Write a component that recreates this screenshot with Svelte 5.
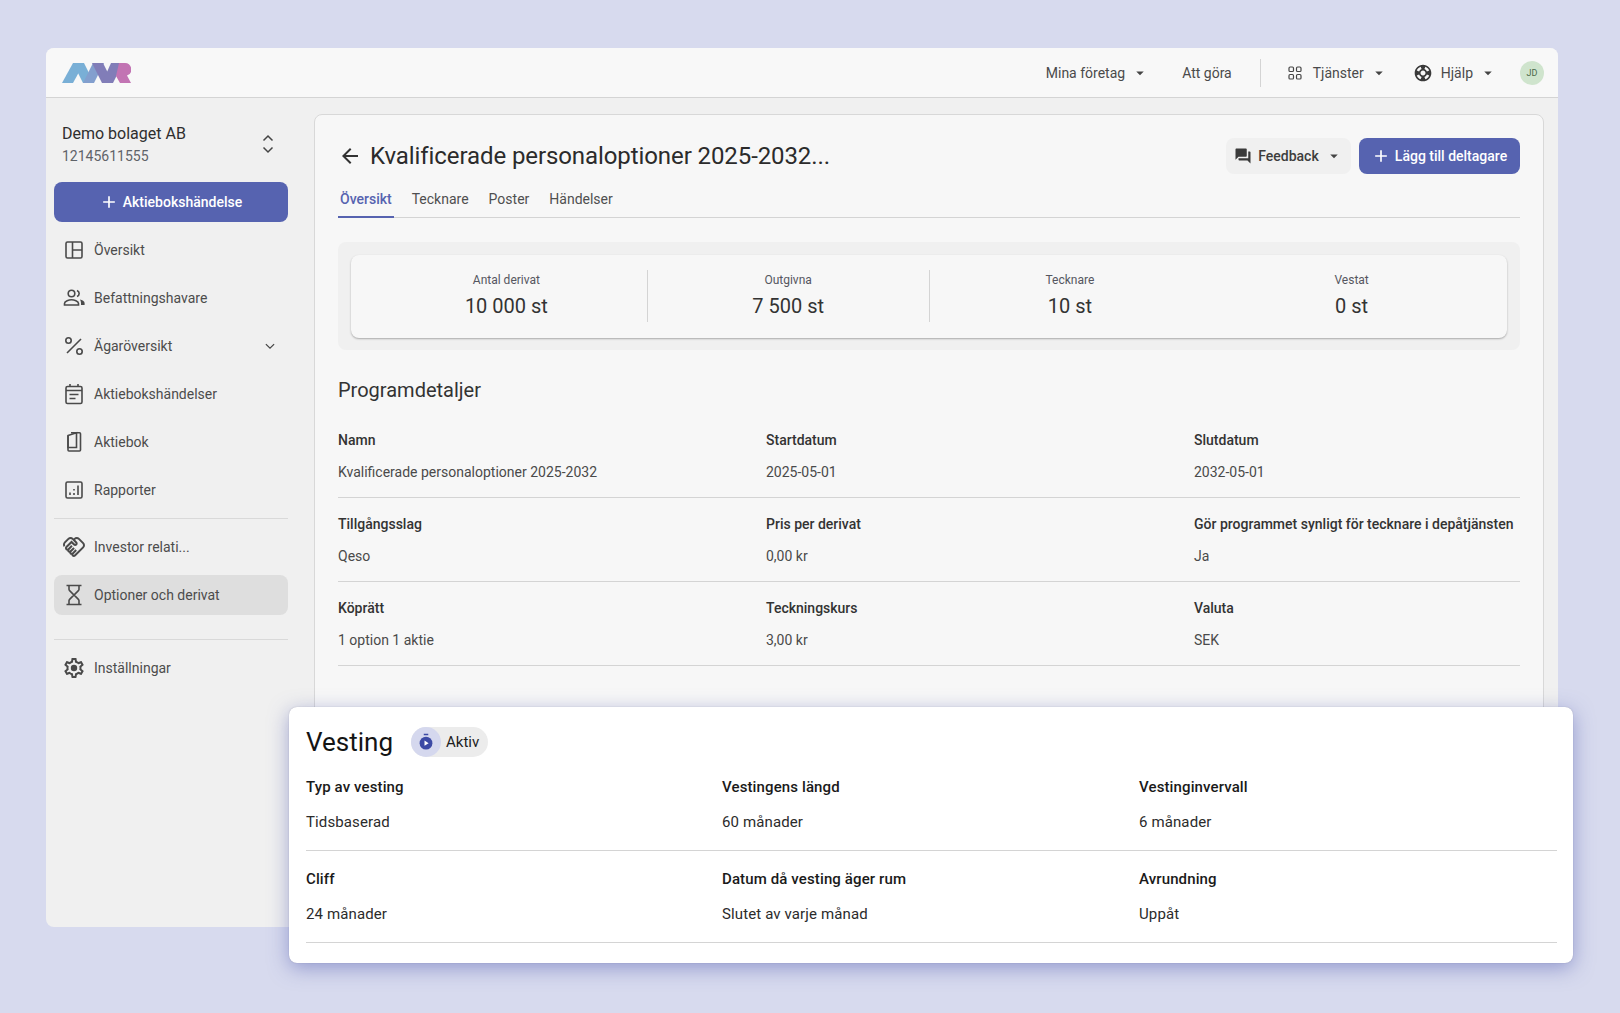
<script>
  const d = {
    add: 'M19 13h-6v6h-2v-6H5v-2h6V5h2v6h6v2z',
    back: 'M20 11H7.83l5.59-5.59L12 4l-8 8 8 8 1.41-1.41L7.83 13H20v-2z',
    drop: 'M7 10l5 5 5-5z',
    forum: 'M21 6h-2v9H6v2c0 .55.45 1 1 1h11l4 4V7c0-.55-.45-1-1-1zm-4 6V3c0-.55-.45-1-1-1H3c-.55 0-1 .45-1 1v14l4-4h10c.55 0 1-.45 1-1z',
    support: 'M12 2C6.48 2 2 6.48 2 12s4.48 10 10 10 10-4.48 10-10S17.52 2 12 2zm7.46 7.12l-2.78 1.15c-.51-1.36-1.58-2.44-2.95-2.94l1.15-2.78c2.1.8 3.77 2.47 4.58 4.57zM12 15c-1.66 0-3-1.34-3-3s1.34-3 3-3 3 1.34 3 3-1.34 3-3 3zM9.13 4.54l1.17 2.78c-1.38.5-2.47 1.59-2.98 2.97L4.54 9.13c.81-2.11 2.48-3.78 4.59-4.59zM4.54 14.87l2.78-1.15c.51 1.38 1.59 2.46 2.97 2.96l-1.17 2.78c-2.1-.81-3.77-2.48-4.58-4.59zm10.34 4.59l-1.15-2.78c1.37-.51 2.45-1.59 2.95-2.97l2.78 1.17c-.81 2.1-2.48 3.77-4.58 4.58z',
    hand: 'M12.22 19.85c-.18.18-.5.21-.71 0-.18-.18-.21-.5 0-.71l3.39-3.39-1.41-1.41-3.39 3.39c-.19.2-.51.19-.71 0-.21-.21-.18-.53 0-.71l3.39-3.39-1.41-1.41-3.39 3.39c-.18.18-.5.21-.71 0-.19-.19-.19-.51 0-.71l3.39-3.39-1.42-1.41-3.39 3.39c-.18.18-.5.21-.71 0-.19-.2-.19-.51 0-.71L9.52 8.4l1.87 1.86c.95.95 2.59.94 3.54 0 .98-.98.98-2.56 0-3.54l-1.86-1.86.28-.28c.78-.78 2.05-.78 2.83 0l4.24 4.24c.78.78.78 2.05 0 2.83l-8.2 8.2zm9.61-6.78c1.56-1.56 1.56-4.09 0-5.66l-4.24-4.24c-1.56-1.56-4.09-1.56-5.66 0l-.28.28-.28-.28c-1.56-1.56-4.09-1.56-5.66 0L2.17 6.71c-1.42 1.42-1.55 3.63-.4 5.19l1.45-1.45c-.39-.75-.26-1.7.37-2.33l3.54-3.54c.78-.78 2.05-.78 2.83 0l3.56 3.56c.18.18.21.5 0 .71-.21.21-.53.18-.71 0L9.52 5.57l-5.8 5.79c-.98.97-.98 2.56 0 3.54.39.39.89.63 1.42.7.07.52.3 1.02.7 1.42.4.4.9.63 1.42.7.07.52.3 1.02.7 1.42.4.4.9.63 1.42.7.07.54.31 1.03.7 1.42.47.47 1.1.73 1.77.73.67 0 1.3-.26 1.77-.73l8.21-8.19z',
    gear: 'M19.43 12.98c.04-.32.07-.64.07-.98 0-.34-.03-.66-.07-.98l2.11-1.65c.19-.15.24-.42.12-.64l-2-3.46c-.09-.16-.26-.25-.44-.25-.06 0-.12.01-.17.03l-2.49 1c-.52-.4-1.08-.73-1.69-.98l-.38-2.65C14.46 2.18 14.25 2 14 2h-4c-.25 0-.46.18-.49.42l-.38 2.65c-.61.25-1.17.59-1.69.98l-2.49-1c-.06-.02-.12-.03-.18-.03-.17 0-.34.09-.43.25l-2 3.46c-.13.22-.07.49.12.64l2.11 1.65c-.04.32-.07.65-.07.98 0 .33.03.66.07.98l-2.11 1.65c-.19.15-.24.42-.12.64l2 3.46c.09.16.26.25.44.25.06 0 .12-.01.17-.03l2.49-1c.52.4 1.08.73 1.69.98l.38 2.65c.03.24.24.42.49.42h4c.25 0 .46-.18.49-.42l.38-2.65c.61-.25 1.17-.59 1.69-.98l2.49 1c.06.02.12.03.18.03.17 0 .34-.09.43-.25l2-3.46c.12-.22.07-.49-.12-.64l-2.11-1.65zm-1.98-1.71c.04.31.05.52.05.73 0 .21-.02.43-.05.73l-.14 1.13.89.7 1.08.84-.7 1.21-1.27-.51-1.04-.42-.9.68c-.43.32-.84.56-1.25.73l-1.06.43-.16 1.13-.2 1.35h-1.4l-.19-1.35-.16-1.13-1.06-.43c-.43-.18-.83-.41-1.23-.71l-.91-.7-1.06.43-1.27.51-.7-1.21 1.08-.84.89-.7-.14-1.13c-.03-.31-.05-.54-.05-.74s.02-.43.05-.73l.14-1.13-.89-.7-1.08-.84.7-1.21 1.27.51 1.04.42.9-.68c.43-.32.84-.56 1.25-.73l1.06-.43.16-1.13.2-1.35h1.39l.19 1.35.16 1.13 1.06.43c.43.18.83.41 1.23.71l.91.7 1.06-.43 1.27-.51.7 1.21-1.07.85-.89.7.14 1.13z'
  };
  const nav1 = [
    { t: 'Översikt', i: 'quilt' },
    { t: 'Befattningshavare', i: 'people' },
    { t: 'Ägaröversikt', i: 'percent', more: true },
    { t: 'Aktiebokshändelser', i: 'cal' },
    { t: 'Aktiebok', i: 'book' },
    { t: 'Rapporter', i: 'chart' }
  ];
  const tabs = ['Översikt', 'Tecknare', 'Poster', 'Händelser'];
  const stats = [['Antal derivat', '10 000 st'], ['Outgivna', '7 500 st'], ['Tecknare', '10 st'], ['Vestat', '0 st']];
  const details = [
    [['Namn', 'Kvalificerade personaloptioner 2025-2032'], ['Startdatum', '2025-05-01'], ['Slutdatum', '2032-05-01']],
    [['Tillgångsslag', 'Qeso'], ['Pris per derivat', '0,00 kr'], ['Gör programmet synligt för tecknare i depåtjänsten', 'Ja']],
    [['Köprätt', '1 option 1 aktie'], ['Teckningskurs', '3,00 kr'], ['Valuta', 'SEK']]
  ];
  const vesting = [
    [['Typ av vesting', 'Tidsbaserad'], ['Vestingens längd', '60 månader'], ['Vestinginvervall', '6 månader']],
    [['Cliff', '24 månader'], ['Datum då vesting äger rum', 'Slutet av varje månad'], ['Avrundning', 'Uppåt']]
  ];
</script>

{#snippet caret()}
  <svg class="caret" viewBox="0 0 24 24"><path d={d.drop} /></svg>
{/snippet}

{#snippet navIcon(name)}
  <svg class="nav-icon" viewBox="0 0 24 24">
    {#if name === 'quilt'}
      <g class="line"><rect x="4" y="4" width="16" height="16" rx="1.500" /><path d="M10.500 4v16M10.500 12H20" /></g>
    {:else if name === 'people'}
      <g class="line"><circle cx="9.500" cy="7.500" r="3.300" /><path d="M2.500 19v-1.600c0-2.400 4.600-3.600 7-3.600s7 1.200 7 3.600V19z" /><path d="M15 4.400a3.300 3.300 0 0 1 0 6.200" /></g>
      <path d="M18 13.400c2.200.5 4.600 1.600 4.600 3.700V19H19v-1.900c0-1.500-.4-2.700-1-3.700z" />
    {:else if name === 'percent'}
      <g class="line"><path d="M19 5 5 19" /><circle cx="6.500" cy="6.500" r="2.700" /><circle cx="17.500" cy="17.500" r="2.700" /></g>
    {:else if name === 'cal'}
      <g class="line"><rect x="4" y="4.500" width="16" height="17" rx="1.500" /><path d="M8 2v3M16 2v3M4 8.500h16M7.500 12.500h9M7.500 16.500h6" /></g>
    {:else if name === 'book'}
      <g class="line"><path d="M9 2.800h8.500a1 1 0 0 1 1 1V20a1 1 0 0 1-1 1H7a1 1 0 0 1-1-1V5.500" /><path d="M6 5.500 14.500 2.800V17.500H6z" /></g>
    {:else if name === 'chart'}
      <g class="line"><rect x="4" y="4" width="16" height="16" rx="1.500" /><path d="M8 14.500V17M12 11v1.500M12 15v2M16 7.500V17" /></g>
    {:else if name === 'hand'}
      <path d={d.hand} />
    {:else if name === 'glass'}
      <g class="line"><path d="M4.500 21.500h15M4.500 2.500h15M17 21.500v-3.700a2 2 0 0 0-.6-1.400L12 12l-4.400 4.400a2 2 0 0 0-.6 1.400v3.700M7 2.500v3.700a2 2 0 0 0 .6 1.400L12 12l4.400-4.400a2 2 0 0 0 .6-1.400V2.500" /></g>
    {:else if name === 'gear'}
      <path d={d.gear} /><circle cx="12" cy="12" r="3.200" />
    {/if}
  </svg>
{/snippet}

{#snippet navItem(item, active)}
  <div class="nav-item" class:active>
    {@render navIcon(item.i)}
    <span>{item.t}</span>
    {#if item.more}
      <svg class="more" viewBox="0 0 24 24"><path d="M6.500 9.500 12 15l5.500-5.500" /></svg>
    {/if}
  </div>
{/snippet}

<div class="window">
  <header class="topbar">
    <svg class="logo" viewBox="0 0 69 20" aria-label="MVR">
      <g opacity=".75">
        <polygon points="0,20 11,0 22,0 11,20" fill="#4f97cb" />
        <polygon points="11,0 22,0 32,20 21,20" fill="#4f97cb" />
        <polygon points="21,20 32,20 42,0 31,0" fill="#5c82c0" />
        <polygon points="30,0 41,0 51,20 40,20" fill="#5a55a3" />
        <polygon points="40,20 51,20 61,0 49,0" fill="#5a55a3" />
        <path d="M57 0h6a6.500 6.500 0 0 1 2 12.600L69 20H58l-4-7z" fill="#b0489c" />
      </g>
    </svg>
    <div class="topnav">
      <div class="tn mina">Mina företag {@render caret()}</div>
      <div class="tn attgora">Att göra</div>
      <div class="sep"></div>
      <div class="tn tjanster">
        <svg class="grid-icon" viewBox="0 0 24 24"><g class="line"><rect x="4" y="4" width="6" height="6" rx="1.500" /><rect x="14" y="4" width="6" height="6" rx="1.500" /><rect x="4" y="14" width="6" height="6" rx="1.500" /><rect x="14" y="14" width="6" height="6" rx="1.500" /></g></svg>
        Tjänster {@render caret()}
      </div>
      <div class="tn hjalp">
        <svg class="life-icon" viewBox="0 0 24 24"><path d={d.support} /></svg>
        Hjälp {@render caret()}
      </div>
      <div class="avatar">JD</div>
    </div>
  </header>

  <div class="body">
    <aside class="sidebar">
      <div class="company">
        <div>
          <div class="co-name">Demo bolaget AB</div>
          <div class="co-id">12145611555</div>
        </div>
        <svg class="unfold" viewBox="0 0 12 20"><path d="M1.500 6.500 6 2l4.500 4.500M1.500 13.500 6 18l4.500-4.500" /></svg>
      </div>
      <button class="primary side-btn">
        <svg class="plus" viewBox="0 0 24 24"><path d={d.add} /></svg>Aktiebokshändelse
      </button>
      <nav class="nav">
        {#each nav1 as item}
          {@render navItem(item, false)}
        {/each}
      </nav>
      <div class="rule rule-a"></div>
      <nav class="nav">
        {@render navItem({ t: 'Investor relati...', i: 'hand' }, false)}
        {@render navItem({ t: 'Optioner och derivat', i: 'glass' }, true)}
      </nav>
      <div class="rule rule-b"></div>
      {@render navItem({ t: 'Inställningar', i: 'gear' }, false)}
    </aside>

    <main class="card">
      <div class="head">
        <svg class="back" viewBox="0 0 24 24"><path d={d.back} /></svg>
        <h1>Kvalificerade personaloptioner 2025-2032...</h1>
        <button class="feedback">
          <svg class="fb-icon" viewBox="0 0 24 24"><path d={d.forum} /></svg>
          Feedback {@render caret()}
        </button>
        <button class="primary add-btn">
          <svg class="plus" viewBox="0 0 24 24"><path d={d.add} /></svg>Lägg till deltagare
        </button>
      </div>

      <div class="tabs">
        {#each tabs as t, i}
          <div class="tab" class:on={i === 0}>{t}</div>
        {/each}
      </div>

      <section class="stats-wrap">
        <div class="stats">
          {#each stats as s, i}
            <div class="stat" class:div={i < 2}>
              <div class="stat-l">{s[0]}</div>
              <div class="stat-v">{s[1]}</div>
            </div>
          {/each}
        </div>
      </section>

      <h2>Programdetaljer</h2>
      {#each details as row}
        <div class="row">
          {#each row as c}
            <div>
              <div class="lbl">{c[0]}</div>
              <div class="val">{c[1]}</div>
            </div>
          {/each}
        </div>
      {/each}
    </main>
  </div>
</div>

<section class="vesting">
  <div class="v-head">
    <h3>Vesting</h3>
    <div class="chip">
      <span class="chip-ic">
        <svg viewBox="0 0 24 24">
          <rect x="9" y="1" width="6" height="2" fill="#3c4aa5" />
          <circle cx="12" cy="13.500" r="8.500" fill="#3c4aa5" />
          <path d="M10 10v7l5.500-3.500z" fill="#fff" />
        </svg>
      </span>
      Aktiv
    </div>
  </div>
  {#each vesting as row}
    <div class="v-row">
      {#each row as c}
        <div>
          <div class="v-lbl">{c[0]}</div>
          <div class="v-val">{c[1]}</div>
        </div>
      {/each}
    </div>
  {/each}
</section>

<style>
  :global(body) {
    margin: 0;
    background: #d7daee;
    font-family: Roboto, "Liberation Sans", sans-serif;
    color: #2b2b2b;
  }
  :global(#app) { height: 1013px; overflow: hidden; position: relative; }
  svg { display: block; flex: none; fill: currentColor; }
  .line, .line * { fill: none; stroke: currentColor; stroke-width: 1.600; }
  button { font-family: inherit; border: 0; cursor: pointer; }

  .window {
    margin: 48px 0 0 46px;
    width: 1512px;
    height: 879px;
    background: #f0f0f0;
    border-radius: 8px;
    overflow: hidden;
  }
  .topbar {
    height: 49px;
    background: #f8f8f8;
    border-bottom: 1px solid #d4d4d4;
    display: flex;
    align-items: center;
    padding: 0 14px 0 16px;
  }
  .logo { width: 69px; height: 20px; }
  .topnav {
    margin-left: auto;
    display: flex;
    align-items: center;
    font-size: 14px;
    color: #4a4a4a;
  }
  .tn { display: flex; align-items: center; white-space: nowrap; }
  .caret { width: 18px; height: 18px; color: #444; margin-left: 6px; }
  .attgora { margin-left: 33px; }
  .sep { width: 1px; height: 28px; background: #d4d4d4; margin: 0 25px 0 28px; }
  .grid-icon { width: 18px; height: 18px; margin-right: 9px; color: #444; }
  .life-icon { width: 20px; height: 20px; margin-right: 8px; color: #3a3a3a; }
  .hjalp { margin-left: 25px; }
  .avatar {
    width: 24px;
    height: 24px;
    margin-left: 23px;
    border-radius: 50%;
    background: #cfe4cd;
    color: #4a6a4a;
    font-size: 9px;
    display: flex;
    align-items: center;
    justify-content: center;
  }

  .body { display: flex; padding: 16px 14px 0 8px; }
  .sidebar { width: 234px; flex: none; margin-right: 26px; }
  .company {
    display: flex;
    justify-content: space-between;
    height: 68px;
    box-sizing: border-box;
    padding: 8px 14px 0 8px;
  }
  .co-name { font-size: 16px; line-height: 24px; color: #2e2e2e; }
  .co-id { font-size: 14px; line-height: 20px; color: #5f6368; }
  .unfold { width: 12px; height: 20px; margin-top: 12px; }
  .unfold path { fill: none; stroke: #444; stroke-width: 1.500; }

  .primary {
    background: #5663b0;
    color: #fff;
    font-weight: 500;
    font-size: 14px;
    border-radius: 8px;
    display: flex;
    align-items: center;
    justify-content: center;
  }
  .plus { width: 20px; height: 20px; margin-right: 4px; }
  .side-btn { width: 234px; height: 40px; padding: 0 1px 0 0; }

  .nav { display: flex; flex-direction: column; gap: 8px; margin-top: 8px; }
  .nav-item {
    height: 40px;
    display: flex;
    align-items: center;
    padding: 0 9px 0 8px;
    border-radius: 8px;
    font-size: 14px;
    color: #4c4c4c;
  }
  .nav-item.active { background: #dedede; }
  .nav-icon { width: 24px; height: 24px; margin-right: 8px; color: #4a4a4a; }
  .more { width: 18px; height: 18px; margin-left: auto; }
  .more path { fill: none; stroke: #444; stroke-width: 1.600; }
  .rule { height: 1px; background: #d9d9d9; }
  .rule-a { margin-top: 8px; }
  .rule-b { margin: 24px 0 8px; }

  .card {
    flex: 1;
    min-width: 0;
    height: 860px;
    background: #f7f7f7;
    border: 1px solid #d8d8d8;
    border-radius: 8px;
    padding: 23px 23px 0;
    box-sizing: border-box;
  }
  .head { display: flex; align-items: center; height: 36px; }
  .back { width: 24px; height: 24px; margin-right: 8px; color: #333; }
  h1 {
    margin: 0;
    font-size: 24px;
    font-weight: 400;
    letter-spacing: -.09px;
    color: #2b2b2b;
    flex: 1;
    white-space: nowrap;
  }
  .feedback {
    width: 125px;
    height: 36px;
    background: #f0f0f0;
    color: #3d3d3d;
    border-radius: 8px;
    font-size: 14px;
    font-weight: 500;
    display: flex;
    align-items: center;
    justify-content: center;
    padding: 0;
    margin-right: 8px;
  }
  .fb-icon { width: 18px; height: 18px; margin-right: 6px; color: #3a3a3a; }
  .add-btn { width: 161px; height: 36px; padding: 0 1px 0 0; }

  .tabs {
    display: flex;
    gap: 16px;
    height: 44px;
    box-sizing: border-box;
    border-bottom: 1px solid #d4d4d4;
    padding-top: 15px;
    margin-bottom: 24px;
  }
  .tab {
    padding: 0 2px;
    font-size: 14px;
    line-height: 20px;
    color: #4f4f4f;
    height: 29px;
    box-sizing: border-box;
  }
  .tab.on { color: #5663b0; font-weight: 500; border-bottom: 2px solid #5663b0; }

  .stats-wrap { background: #f0f0f0; border-radius: 8px; padding: 13px; height: 108px; box-sizing: border-box; }
  .stats {
    height: 83px;
    background: #f7f7f7;
    border-radius: 8px;
    box-shadow: 0 1px 2px rgba(0,0,0,.3);
    display: grid;
    grid-template-columns: repeat(4, 1fr);
    padding: 15px 14px 15px 15px;
    box-sizing: border-box;
  }
  .stat { text-align: center; border-right: 1px solid transparent; height: 52px; }
  .stat.div { border-right-color: #d4d4d4; }
  .stat-l { font-size: 12px; line-height: 20px; color: #55565f; }
  .stat-v { font-size: 20px; line-height: 30px; color: #333; margin-top: 1px; }

  h2 {
    margin: 26px 0 10px;
    font-size: 20px;
    line-height: 28px;
    font-weight: 400;
    color: #333;
  }
  .row {
    display: grid;
    grid-template-columns: 428px 428px 1fr;
    height: 84px;
    box-sizing: border-box;
    border-bottom: 1px solid #d4d4d4;
    padding-top: 16px;
  }
  .lbl { font-size: 14px; line-height: 20px; font-weight: 500; color: #333; white-space: nowrap; }
  .val { font-size: 14px; line-height: 20px; color: #4a4a4a; margin-top: 12px; }

  .vesting {
    position: absolute;
    left: 289px;
    top: 707px;
    width: 1284px;
    height: 256px;
    box-sizing: border-box;
    background: #fff;
    border-radius: 8px;
    padding: 17px 16px 0 17px;
    box-shadow: 0 0 1px rgba(60, 60, 90, .4), 0 5px 20px rgba(80, 90, 175, .5);
  }
  .v-head { display: flex; align-items: center; height: 36px; }
  h3 { margin: 0; font-size: 26px; font-weight: 400; line-height: 36px; color: #141414; }
  .chip {
    margin-left: 18px;
    height: 30px;
    border-radius: 15px;
    background: #ececec;
    display: flex;
    align-items: center;
    font-size: 15px;
    color: #1d1d1d;
    padding-right: 9px;
  }
  .chip-ic {
    width: 30px;
    height: 30px;
    border-radius: 50%;
    background: #d5d8ee;
    display: flex;
    align-items: center;
    justify-content: center;
    margin-right: 5px;
  }
  .chip-ic svg { width: 18px; height: 18px; }
  .v-row {
    display: grid;
    grid-template-columns: 416px 417px 1fr;
    height: 92px;
    box-sizing: border-box;
    border-bottom: 1px solid #d4d4d4;
    padding-top: 17px;
  }
  .v-head + .v-row { height: 91px; padding-top: 16px; }
  .v-lbl { font-size: 15px; line-height: 22px; font-weight: 500; letter-spacing: .12px; color: #1a1a1a; }
  .v-val { font-size: 15px; line-height: 22px; letter-spacing: .12px; color: #2b2b2b; margin-top: 13px; }
</style>
